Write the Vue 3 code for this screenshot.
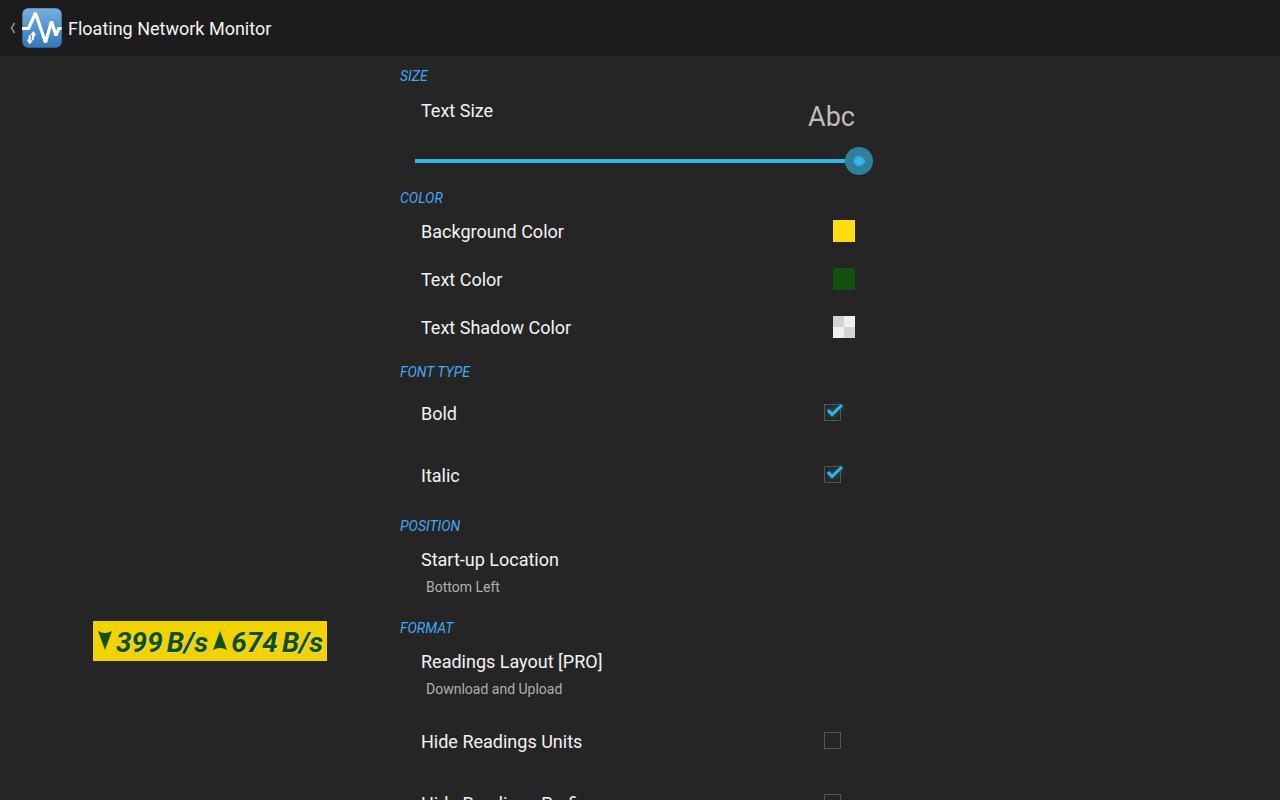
<script setup>
import { ref } from 'vue'

const textSize = ref(100)
const swatches = [
  { label: 'Background Color', kind: 'yellow' },
  { label: 'Text Color', kind: 'green' },
  { label: 'Text Shadow Color', kind: 'checker' }
]
const fontTypes = ref([
  { id: 'bold', label: 'Bold', on: true },
  { id: 'italic', label: 'Italic', on: true }
])
const formats = ref([
  { id: 'units', label: 'Hide Readings Units', on: false },
  { id: 'prefix', label: 'Hide Readings Prefix', on: false }
])
</script>

<template>
  <div class="app">
    <header class="bar">
      <button class="home" type="button" aria-label="Navigate up">
        <svg class="chevron" viewBox="0 0 6 12" aria-hidden="true">
          <path d="M4.7 .8L1.5 6l3.2 5.2" />
        </svg>
        <svg class="logo" viewBox="0 0 40 40" aria-hidden="true">
          <defs>
            <linearGradient id="logo-fill" x1="0" y1="0" x2="0" y2="1">
              <stop offset="0" stop-color="#78aede" />
              <stop offset="1" stop-color="#3277bd" />
            </linearGradient>
          </defs>
          <rect x=".3" y=".3" width="39.4" height="39.4" rx="6" fill="url(#logo-fill)" />
          <path class="wave" d="M0 20.5h6.500L13.500 5l10 29.500L29.500 13.500l4.500 14L36.800 20.500h2.900" />
          <path class="arrows" d="M11.500 23l2.700 4.600-1.700-.2-.7 4.600-2.300-.3.700-4.600-1.900-.3z" />
          <path class="arrows" d="M6.900 27.300l2.300.3-.7 4.600 2.600.3L7.500 36.500 4.800 31.600l1.500.2z" />
        </svg>
      </button>
      <h1>Floating Network Monitor</h1>
    </header>

    <main class="settings">
      <section>
        <h2>SIZE</h2>
        <div class="row size-row">
          <label class="title" for="text-size">Text Size</label>
          <output class="sample" for="text-size">Abc</output>
        </div>
        <input id="text-size" v-model="textSize" class="slider" type="range" min="0" max="100" />
      </section>

      <section>
        <h2>COLOR</h2>
        <div class="colors">
          <button v-for="s in swatches" :key="s.kind" class="row color-row" type="button">
            <span class="title">{{ s.label }}</span>
            <span class="swatch" :class="s.kind"></span>
          </button>
        </div>
      </section>

      <section>
        <h2>FONT TYPE</h2>
        <label v-for="f in fontTypes" :key="f.id" class="row check-row">
          <span class="title">{{ f.label }}</span>
          <span class="check">
            <input v-model="f.on" type="checkbox" />
            <svg v-if="f.on" viewBox="0 0 23 21" aria-hidden="true"><path d="M5 9l4 4.500L19 4" /></svg>
          </span>
        </label>
      </section>

      <section>
        <h2>POSITION</h2>
        <button class="row stacked" type="button">
          <span class="title">Start-up Location</span>
          <span class="summary">Bottom Left</span>
        </button>
      </section>

      <section>
        <h2>FORMAT</h2>
        <button class="row stacked" type="button">
          <span class="title">Readings Layout [PRO]</span>
          <span class="summary">Download and Upload</span>
        </button>
        <label v-for="f in formats" :key="f.id" class="row check-row">
          <span class="title">{{ f.label }}</span>
          <span class="check">
            <input v-model="f.on" type="checkbox" />
            <svg v-if="f.on" viewBox="0 0 23 21" aria-hidden="true"><path d="M5 9l4 4.500L19 4" /></svg>
          </span>
        </label>
      </section>
    </main>

    <aside class="monitor" aria-label="Network speed">
      <svg viewBox="0 0 14 20" aria-hidden="true"><path d="M0 0q7 4 14 0L7 19z" /></svg>
      <span>399</span><span class="unit">B/s</span>
      <svg class="up" viewBox="0 0 14 20" aria-hidden="true"><path d="M7 0l7 19q-7-4-14 0z" /></svg>
      <span>674</span><span class="unit">B/s</span>
    </aside>
  </div>
</template>

<style>
body {
  margin: 0;
  background: #252525;
}
</style>

<style scoped>
.app {
  display: flex;
  flex-direction: column;
  height: 100vh;
  overflow: hidden;
  background: #252525;
  color: #f3f3f3;
  font-family: Roboto, "Noto Sans", sans-serif;
}
button {
  margin: 0;
  padding: 0;
  border: 0;
  background: none;
  color: inherit;
  font: inherit;
  text-align: left;
}
.bar {
  display: flex;
  flex: none;
  align-items: center;
  gap: 6px;
  height: 56px;
  padding-left: 10px;
  background: #1c1c1c;
}
.home {
  display: flex;
  align-items: center;
  gap: 6px;
}
.chevron {
  width: 6px;
  height: 12px;
  fill: none;
  stroke: #909090;
  stroke-width: 1.5;
}
.logo {
  width: 40px;
  height: 40px;
}
.wave {
  fill: none;
  stroke: #fff;
  stroke-width: 3.2;
  stroke-linejoin: miter;
  stroke-miterlimit: 2;
}
.arrows {
  fill: #fff;
}
h1 {
  margin: 0;
  padding-top: 2px;
  font-size: 18px;
  font-weight: 400;
  line-height: 28px;
}
.settings {
  flex: 1;
  box-sizing: border-box;
  width: 100%;
  max-width: 480px;
  margin: 0 auto;
  padding-top: 10px;
  overflow-y: auto;
  scrollbar-width: none;
}
section {
  padding-bottom: 10px;
}
h2 {
  margin: 0;
  color: #44a8f4;
  font-size: 14px;
  font-style: italic;
  font-weight: 400;
  line-height: 20px;
}
.row {
  display: flex;
  box-sizing: border-box;
  align-items: center;
  justify-content: space-between;
  width: 100%;
  padding: 0 25px 0 21px;
}
.title {
  padding-top: 2px;
  font-size: 18px;
  line-height: 28px;
}
.size-row {
  align-items: flex-start;
  height: 60px;
  padding-top: 9px;
}
.sample {
  padding-top: 2px;
  color: #bebebe;
  font-size: 27px;
  line-height: 40px;
}
.slider {
  display: block;
  width: calc(100% - 22px);
  height: 30px;
  margin: 0 7px 2px 15px;
  appearance: none;
  background: linear-gradient(#33b5e5, #33b5e5) 0 50% / calc(100% - 8px) 4px no-repeat;
}
.slider::-webkit-slider-thumb {
  width: 28px;
  height: 28px;
  appearance: none;
  border-radius: 50%;
  background:
    radial-gradient(circle, #33b5e5 4px, transparent 6px),
    linear-gradient(#33b5e5, #33b5e5) 9px 50% / 11px 3px no-repeat,
    #2f7f9d;
}
.colors {
  display: flex;
  flex-direction: column;
  gap: 2px;
}
.color-row {
  height: 46px;
}
.colors {
  padding-bottom: 2px;
}
.swatch {
  width: 22px;
  height: 22px;
}
.yellow {
  background: #fddd10;
}
.green {
  background: #14500f;
}
.checker {
  background: repeating-conic-gradient(#efefef 0 25%, #d3d3d3 0 50%);
}
.check-row {
  height: 62px;
}
.check {
  position: relative;
  width: 17px;
  height: 17px;
  margin: 0 14px 2px 0;
}
.check input {
  display: block;
  box-sizing: border-box;
  width: 17px;
  height: 17px;
  margin: 0;
  appearance: none;
  border: 1px solid #555;
}
.check svg {
  position: absolute;
  top: -3px;
  left: -1px;
  width: 23px;
  height: 21px;
  overflow: visible;
  pointer-events: none;
  fill: none;
  stroke: #33b5e5;
  stroke-width: 3;
  filter: drop-shadow(0 0 3px #1d6f8f);
}
.stacked {
  flex-direction: column;
  align-items: flex-start;
  justify-content: flex-start;
  height: 72px;
  padding-top: 8px;
}
.summary {
  padding-left: 5px;
  color: #b0b0b0;
  font-size: 14px;
  line-height: 26px;
}
.monitor {
  position: absolute;
  bottom: 139px;
  left: 93px;
  display: flex;
  align-items: center;
  height: 40px;
  padding: 0 4px 0 5px;
  background: #f1d302;
  color: #14500f;
  font-size: 28px;
  font-style: italic;
  font-weight: 700;
  text-shadow: 1px 1px 1px #ddd68c;
  box-shadow: 0 0 1px #14142a;
}
.monitor span {
  padding-top: 3px;
}
.monitor svg {
  width: 14px;
  height: 20px;
  margin-right: 4px;
  fill: currentColor;
}
.monitor .up {
  margin-left: 5px;
}
.monitor .unit {
  margin-left: 4px;
}
</style>
